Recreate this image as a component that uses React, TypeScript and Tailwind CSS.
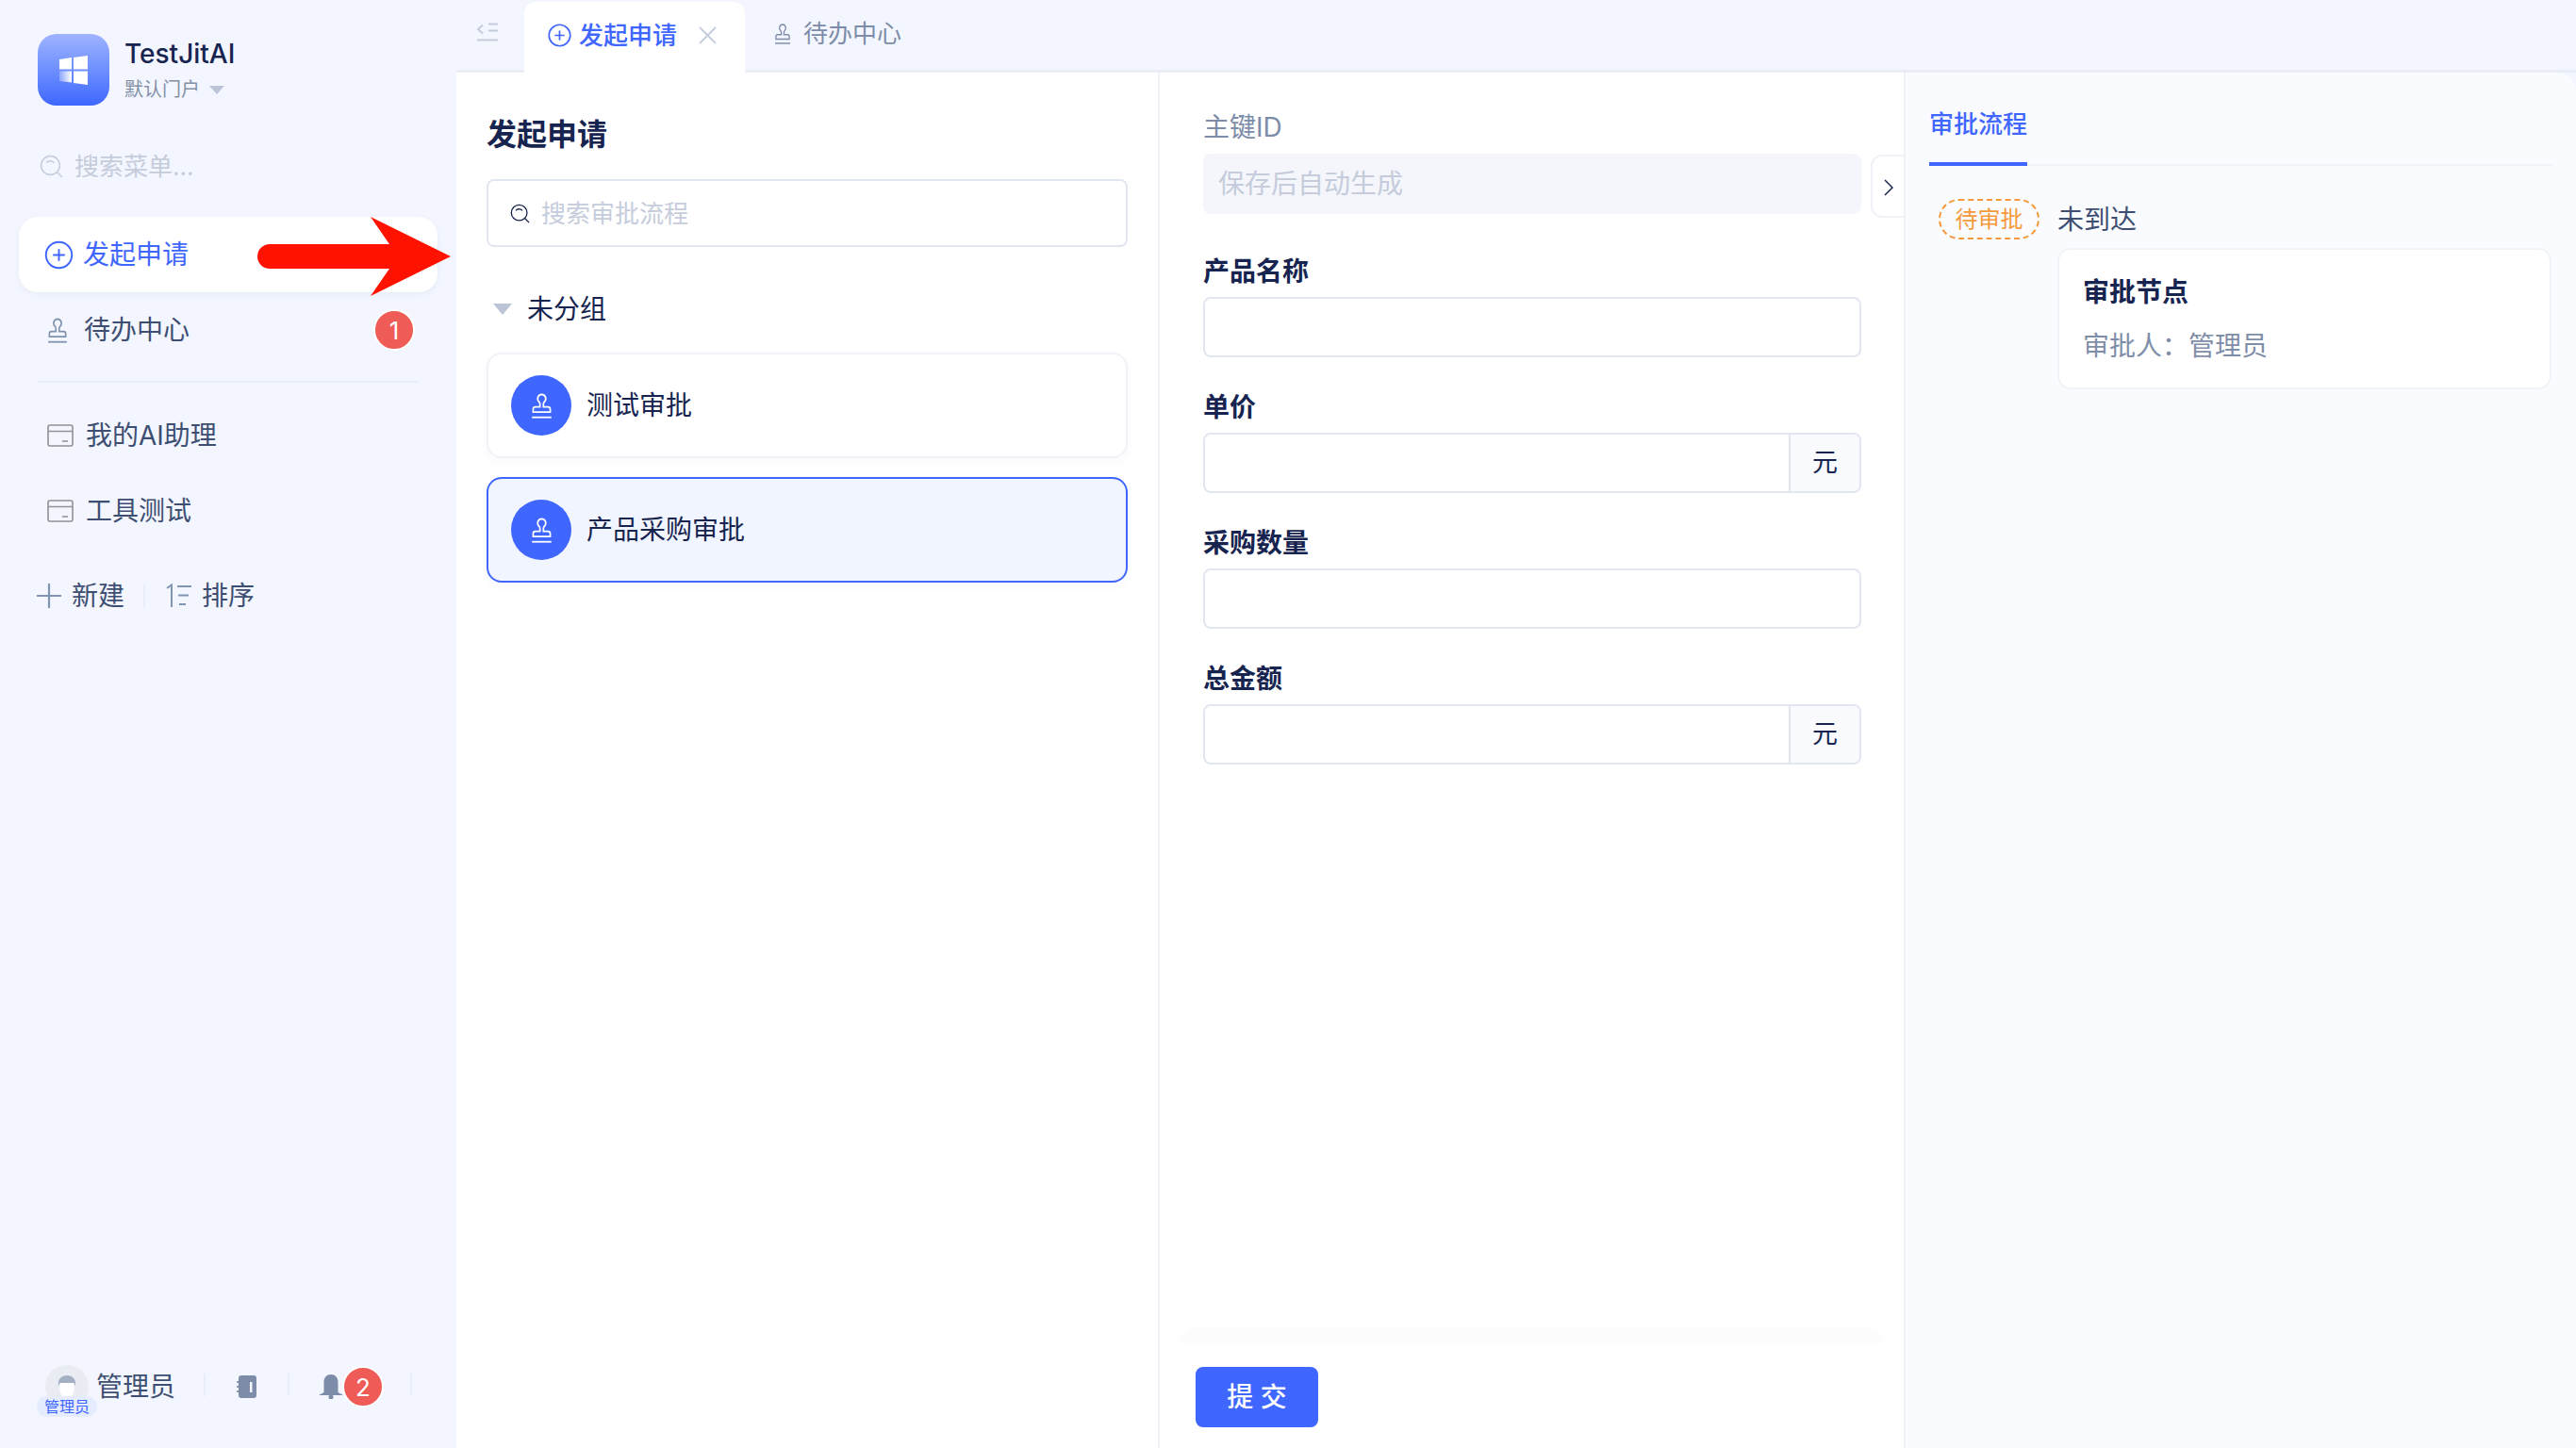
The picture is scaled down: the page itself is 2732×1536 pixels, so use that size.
import { CirclePlus } from 'lucide-react';

function StampIcon({ className }: { className?: string }) {
  return (
    <svg viewBox="2.500 1.500 19 21" preserveAspectRatio="none" fill="none" stroke="currentColor" strokeWidth="1.4" className={className}>
      <path d="M12 2.500a3.600 3.600 0 0 0-2.200 6.400c.5.4.7.9.7 1.500v2.400H6.500a2 2 0 0 0-2 2v2.400h15v-2.400a2 2 0 0 0-2-2h-4v-2.400c0-.6.2-1.100.7-1.500A3.600 3.600 0 0 0 12 2.500z" />
      <path d="M3.500 21.500h17" />
    </svg>
  );
}

function SearchIcon({ className }: { className?: string }) {
  return (
    <svg viewBox="0 0 24 24" fill="none" stroke="currentColor" strokeWidth="1.5" className={className}>
      <circle cx="11" cy="11" r="9.500" />
      <path d="M7 8.500c1-1.600 3-2.200 5-1.800 1.200.2 2.200.9 2.800 1.800" />
      <path d="M18 18l5 5" />
    </svg>
  );
}

function CardIcon() {
  return (
    <svg viewBox="0 0 28 24" fill="none" stroke="#8f9297" strokeWidth="1.6" className="h-[24px] w-[28px] shrink-0">
      <rect x="1" y="1" width="26" height="22" rx="2" />
      <path d="M1 7.500h26M16 18h6" />
    </svg>
  );
}

function MenuItem({ label }: { label: string }) {
  return (
    <div className="flex h-[80px] items-center gap-[13px] pl-[50px] text-[28px] text-[#3d4e72]">
      <CardIcon />
      <span>{label}</span>
    </div>
  );
}

function Field({ label, unit, className }: { label: string; unit?: string; className?: string }) {
  return (
    <div className={className}>
      <div className="flex h-[40px] items-center pt-[2px] text-[28px] font-semibold text-[#16244f]">{label}</div>
      <div className="mt-[8px] flex h-[64px] w-[698px] overflow-hidden rounded-[8px] border-2 border-[#e2e6f0] bg-white">
        <div className="flex-1" />
        {unit ? (
          <div className="flex w-[75px] items-center justify-center border-l-2 border-[#e2e6f0] bg-[#f8fafe] text-[27px] text-[#16244f]">
            {unit}
          </div>
        ) : null}
      </div>
    </div>
  );
}

function ProcessCard({ label, active }: { label: string; active?: boolean }) {
  return (
    <div
      className={
        active
          ? 'flex h-[112px] items-center gap-[16px] rounded-[16px] border-2 border-[#3f66ff] bg-[#f1f5ff] pl-[24px] text-[28px] text-[#16244f] shadow-[0_4px_12px_rgba(30,60,120,0.03)]'
          : 'flex h-[112px] items-center gap-[16px] rounded-[16px] border-2 border-[#f0f2f7] bg-white pl-[24px] text-[28px] text-[#16244f] shadow-[0_4px_12px_rgba(30,60,120,0.03)]'
      }
    >
      <div className="flex h-[64px] w-[64px] items-center justify-center rounded-full bg-[#3f66ff] text-white">
        <StampIcon className="h-[27px] w-[23px]" />
      </div>
      <span>{label}</span>
    </div>
  );
}

function CountBadge({ value }: { value: string }) {
  return (
    <div className="flex h-[44px] w-[44px] items-center justify-center rounded-full border-2 border-white bg-[#ef5b56] text-[26px] text-white">
      {value}
    </div>
  );
}

function Sidebar() {
  return (
    <aside className="flex h-full w-[484px] shrink-0 flex-col">
      <div className="flex gap-[16px] pl-[40px] pt-[36px]">
        <div className="flex h-[76px] w-[76px] items-center justify-center rounded-[20px] bg-linear-to-b from-[#9fb3ff] to-[#3f66ff]">
          <svg viewBox="0 0 30 31" className="h-[31px] w-[30px]">
            <defs>
              <linearGradient id="pane" x1="0" y1="0" x2="1" y2="0">
                <stop offset="0" stopColor="#ffffff" stopOpacity="0.25" />
                <stop offset="1" stopColor="#ffffff" />
              </linearGradient>
            </defs>
            <polygon points="0,4 13,2 13,14.500 0,14.500" fill="#fff" />
            <polygon points="15,2 30,0 30,14.500 15,14.500" fill="#fff" />
            <polygon points="0,16.500 13,16.500 13,28.500 0,27" fill="url(#pane)" />
            <polygon points="15,16.500 30,16.500 30,31 15,29" fill="#fff" />
          </svg>
        </div>
        <div className="flex flex-col">
          <div className="mt-[3px] h-[36px] text-[28px] font-medium leading-[36px] text-[#16244f]">TestJitAI</div>
          <div className="mt-[4px] flex h-[32px] items-center gap-[10px] text-[20px] text-[#8390a8]">
            <span>默认门户</span>
            <svg viewBox="0 0 16 9" className="h-[9px] w-[16px]" fill="#bcc5d8">
              <path d="M0 0h16L8 9z" />
            </svg>
          </div>
        </div>
      </div>

      <div className="mt-[44px] flex h-[40px] items-center gap-[12px] pl-[42px] text-[26px] text-[#c5ccdb]">
        <SearchIcon className="h-[25px] w-[25px]" />
        <span>搜索菜单...</span>
      </div>

      <div className="mx-[20px] mt-[34px] flex h-[80px] w-[444px] items-center gap-[9px] rounded-[20px] bg-white pl-[26px] text-[28px] text-[#3f66ff] shadow-[0_2px_6px_rgba(30,60,120,0.06)]">
        <CirclePlus className="h-[33px] w-[33px]" strokeWidth={1.4} />
        <span>发起申请</span>
      </div>
      <div className="flex h-[80px] items-center justify-between pl-[50px] pr-[44px] text-[28px] text-[#3d4e72]">
        <div className="flex items-center gap-[17px]">
          <StampIcon className="h-[27px] w-[22px] text-[#8192ad]" />
          <span>待办中心</span>
        </div>
        <CountBadge value="1" />
      </div>

      <div className="mx-[40px] mt-[14px] h-[2px] w-[404px] bg-[#e9edf5]" />

      <div className="mt-[16px]">
        <MenuItem label="我的AI助理" />
        <MenuItem label="工具测试" />
      </div>

      <div className="mt-[30px] flex h-[40px] items-center pl-[39px] text-[28px] text-[#3d4e72]">
        <svg viewBox="0 0 26 26" fill="none" stroke="#8095b3" strokeWidth="2.200" className="h-[26px] w-[26px]">
          <path d="M13 0v26M0 13h26" />
        </svg>
        <span className="ml-[11px]">新建</span>
        <div className="ml-[20px] h-[25px] w-[2px] bg-[#e9edf5]" />
        <svg viewBox="0 0 28 26" fill="none" stroke="#8095b3" strokeWidth="2" className="ml-[22px] h-[26px] w-[28px]">
          <path d="M1 5l5-3.500V25M12 3h15M13 12.500h11M14 22h7" />
        </svg>
        <span className="ml-[10px]">排序</span>
      </div>

      <div className="mt-auto flex h-[110px] items-start pl-[48px] pt-[22px]">
        <div className="relative h-[46px] w-[46px] shrink-0 overflow-visible rounded-full bg-[#e9edf3]">
          <svg viewBox="0 0 46 46" className="h-[46px] w-[46px]">
            <path d="M14 22c-1-7 3-11 9-11s10 4 9 11l-2-3H16z" fill="#a3afc2" />
            <path d="M15.500 19h15v7c0 5-3 9-7.500 9s-7.500-4-7.500-9z" fill="#fff" />
          </svg>
          <div className="absolute left-[-9px] top-[33px] flex h-[22px] w-[64px] items-center justify-center rounded-full bg-[#e6ecff] text-[16px] leading-none text-[#3f66ff]">
            管理员
          </div>
        </div>
        <div className="ml-[8px] flex h-[46px] items-center text-[28px] text-[#3d4e72]">管理员</div>
        <div className="ml-[30px] mt-[9px] h-[24px] w-[2px] bg-[#e9edf5]" />
        <svg viewBox="0 0 21 24" className="ml-[33px] mt-[11px] h-[24px] w-[21px]" fill="#7d8ca8">
          <rect x="2" y="0" width="19" height="24" rx="3" />
          <rect x="14" y="7" width="2.500" height="11" fill="#f3f6fe" />
          <rect x="0" y="6" width="4" height="2" rx="1" />
          <rect x="0" y="11" width="4" height="2" rx="1" />
          <rect x="0" y="16" width="4" height="2" rx="1" />
        </svg>
        <div className="ml-[33px] mt-[9px] h-[24px] w-[2px] bg-[#e9edf5]" />
        <svg viewBox="0 0 26 26" className="ml-[31px] mt-[10px] h-[26px] w-[26px]" fill="#7d8ca8">
          <path d="M13 0c4.500 0 7.500 3.500 7.500 8v11l5.500 3H0l5.500-3V8C5.500 3.500 8.500 0 13 0z" />
          <circle cx="13" cy="24" r="2.500" />
        </svg>
        <div className="ml-[-1px] mt-[1px]">
          <CountBadge value="2" />
        </div>
        <div className="ml-[28px] mt-[9px] h-[24px] w-[2px] bg-[#e9edf5]" />
      </div>
    </aside>
  );
}

function TabBar() {
  return (
    <div className="flex h-[77px] shrink-0 items-end border-b-[3px] border-[#e9edf5]">
      <svg viewBox="0 0 24 20" fill="none" stroke="#c3cbdc" strokeWidth="2" className="mb-[30px] ml-[21px] h-[20px] w-[24px]">
        <path d="M7 2.500L2 7l5 4.500M13 1.500h10M13 8.500h10M1 18.500h22" />
      </svg>
      <div className="mb-[-3px] ml-[27px] flex h-[75px] w-[234px] items-center rounded-t-[12px] bg-white pb-[4px] pl-[24px] text-[26px] font-medium text-[#3f66ff]">
        <CirclePlus className="h-[27px] w-[27px]" strokeWidth={1.5} />
        <span className="ml-[7px]">发起申请</span>
        <svg viewBox="0 0 19 19" fill="none" stroke="#c3cbdc" strokeWidth="1.800" className="ml-[23px] h-[19px] w-[19px]">
          <path d="M1 1l17 17M18 1L1 18" />
        </svg>
      </div>
      <div className="ml-[31px] flex h-[75px] items-center gap-[13px] pb-[2px] text-[26px] text-[#7d8ca8]">
        <StampIcon className="h-[22px] w-[18px]" />
        <span>待办中心</span>
      </div>
    </div>
  );
}

function ProcessColumn() {
  return (
    <section className="h-full w-[746px] shrink-0 border-r-2 border-[#eef1f8] bg-white pl-[32px] pr-[32px]">
      <h1 className="mt-[46px] flex h-[40px] items-center text-[32px] font-semibold text-[#16244f]">发起申请</h1>
      <div className="mt-[27px] flex h-[72px] items-center gap-[12px] rounded-[8px] border-2 border-[#e2e6f0] pl-[23px] text-[26px] text-[#c5ccdb]">
        <SearchIcon className="h-[21px] w-[21px] text-[#16244f]" />
        <span>搜索审批流程</span>
      </div>
      <div className="mt-[46px] flex h-[40px] items-center text-[28px] text-[#16244f]">
        <svg viewBox="0 0 20 12" fill="#bcc5d8" className="ml-[7px] h-[12px] w-[20px]">
          <path d="M0 0h20L10 12z" />
        </svg>
        <span className="ml-[16px]">未分组</span>
      </div>
      <div className="mt-[26px] flex flex-col gap-[20px]">
        <ProcessCard label="测试审批" />
        <ProcessCard label="产品采购审批" active />
      </div>
    </section>
  );
}

function FormColumn() {
  return (
    <section className="relative flex h-full w-[791px] shrink-0 flex-col border-r-2 border-[#eef1f8] bg-white pl-[46px]">
      <div className="mt-[38px]">
        <div className="flex h-[40px] items-center text-[28px] text-[#7d8ca8]">主键ID</div>
        <div className="mt-[8px] flex h-[64px] w-[698px] items-center rounded-[8px] bg-[#f4f6fb] pl-[16px] text-[28px] text-[#c5ccdb]">
          保存后自动生成
        </div>
      </div>
      <Field label="产品名称" className="mt-[40px]" />
      <Field label="单价" unit="元" className="mt-[32px]" />
      <Field label="采购数量" className="mt-[32px]" />
      <Field label="总金额" unit="元" className="mt-[32px]" />

      <div className="absolute right-0 top-[87px] flex h-[67px] w-[35px] items-center justify-center rounded-l-[12px] border-2 border-r-0 border-[#f0f2f7] bg-white pt-[3px]">
        <svg viewBox="0 0 10 18" fill="none" stroke="#16244f" strokeWidth="1.500" className="h-[18px] w-[10px]">
          <path d="M1 1l8 8-8 8" />
        </svg>
      </div>

      <div className="ml-[-26px] mr-[20px] mt-auto h-[128px] rounded-t-[20px] bg-[#fcfcfc]">
        <div className="mt-[17px] h-[111px] bg-white pl-[18px] pt-[25px]">
          <button className="h-[64px] w-[130px] rounded-[8px] bg-[#3f66ff] text-[28px] font-medium text-white">提 交</button>
        </div>
      </div>
    </section>
  );
}

function ApprovalPanel() {
  return (
    <section className="h-full flex-1 rounded-tr-[20px] bg-[#fafbfe] pl-[25px] pr-[25px]">
      <div className="relative h-[99px] border-b-2 border-[#eef1f8]">
        <div className="absolute bottom-[-2px] left-0 flex h-[62px] w-[104px] items-start justify-center border-b-4 border-[#3f66ff] text-[26px] font-medium leading-[36px] text-[#3f66ff]">
          审批流程
        </div>
      </div>
      <div className="mt-[35px] flex items-center">
        <div className="ml-[10px] flex h-[43px] w-[107px] items-center justify-center rounded-full border-2 border-dashed border-[#f59a3c] text-[24px] text-[#f59a3c]">
          待审批
        </div>
        <span className="ml-[19px] text-[28px] text-[#3d4e72]">未到达</span>
      </div>
      <div className="ml-[136px] mt-[9px] h-[150px] w-[524px] rounded-[14px] border-2 border-[#f0f3f8] bg-white pl-[25px]">
        <div className="mt-[25px] flex h-[40px] items-center text-[28px] font-semibold text-[#16244f]">审批节点</div>
        <div className="mt-[17px] flex h-[40px] items-center text-[28px] text-[#7f8ea8]">审批人：管理员</div>
      </div>
    </section>
  );
}

export default function App() {
  return (
    <div className="relative flex h-[1536px] w-[2732px] overflow-hidden bg-[#f3f6fe] font-['Inter','Noto_Sans_CJK_SC',sans-serif]">
      <Sidebar />
      <main className="flex h-full min-w-0 flex-1 flex-col">
        <TabBar />
        <div className="flex min-h-0 flex-1">
          <ProcessColumn />
          <FormColumn />
          <ApprovalPanel />
        </div>
      </main>
      <svg viewBox="0 0 205 84" className="absolute left-[273px] top-[230px] h-[84px] w-[205px]" fill="#ff1200">
        <path d="M13 29H140L120 0L205 42L120 84L140 55H13a13 13 0 0 1 0-26z" />
      </svg>
    </div>
  );
}
